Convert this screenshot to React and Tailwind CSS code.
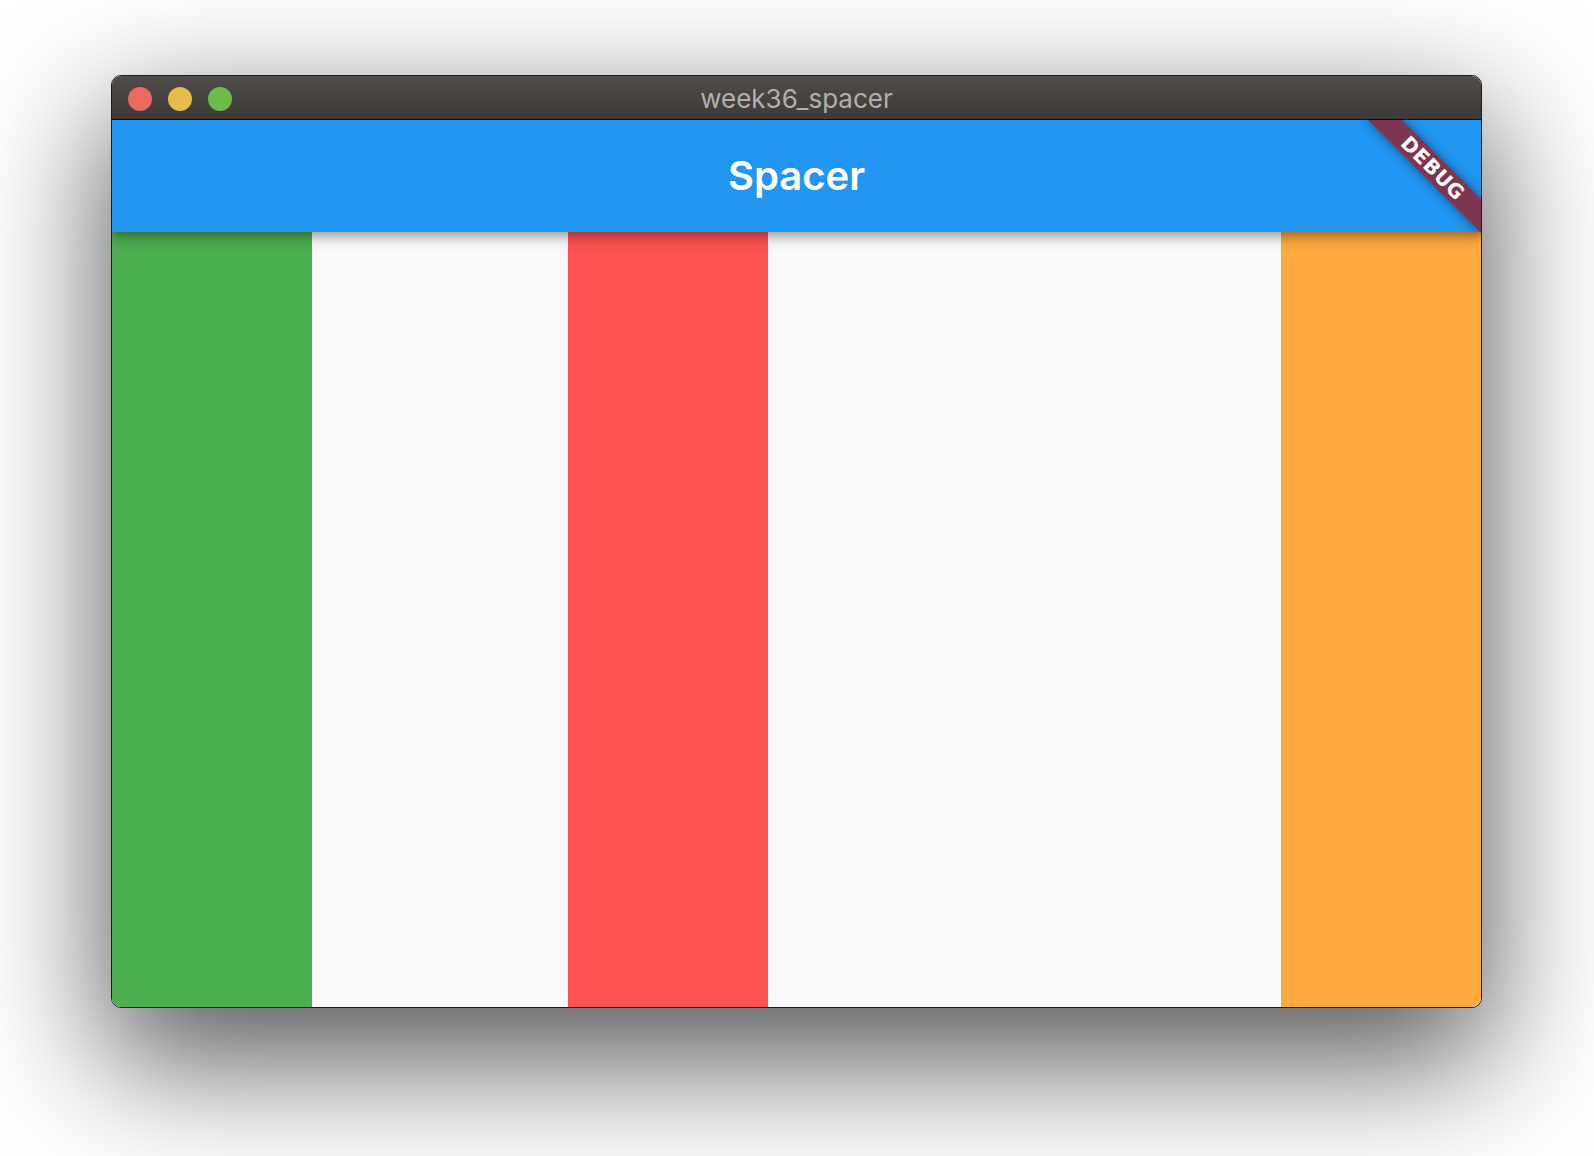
export default function App() {
  return (
    <div className="w-[1594px] h-[1156px] bg-white overflow-hidden pl-[111px] pt-[75px]">
      <div className="w-[1371px] h-[933px] rounded-[10px] border border-[#1c1c1c] bg-[#fafafa] flex flex-col overflow-hidden shadow-[0_48px_130px_6px_rgba(0,0,0,0.66)]">
        {/* Title bar */}
        <div className="relative h-[44px] shrink-0 bg-gradient-to-b from-[#4f4c4a] to-[#3c3937] border-b border-[#0d0d0d] flex items-center">
          <div className="flex items-center gap-[16px] pl-[16px] pt-[2px]">
            <div className="w-[24px] h-[24px] rounded-full bg-[#ed6a5e]" />
            <div className="w-[24px] h-[24px] rounded-full bg-[#e1bf4a]" />
            <div className="w-[24px] h-[24px] rounded-full bg-[#6cbd46]" />
          </div>
          <div className="absolute inset-0 flex items-center justify-center pt-[3px]">
            <span className="text-[26px] text-[#b2afad] font-['Inter',sans-serif] leading-none">week36_spacer</span>
          </div>
        </div>
        {/* Body */}
        <div className="relative flex-1 flex flex-col overflow-hidden">
          <div className="relative z-10 h-[112px] shrink-0 bg-[#2196f3] flex items-center justify-center shadow-[0_4px_8px_-2px_rgba(0,0,0,0.2),0_8px_10px_0_rgba(0,0,0,0.14),0_2px_20px_0_rgba(0,0,0,0.12)]">
            <span className="text-white text-[40px] font-semibold font-['Inter',sans-serif] leading-none">Spacer</span>
          </div>
          <div className="flex-1 flex">
            <div className="w-[200px] shrink-0 bg-[#4caf50]" />
            <div className="flex-1" />
            <div className="w-[200px] shrink-0 bg-[#ff5252]" />
            <div className="flex-[2]" />
            <div className="w-[200px] shrink-0 bg-[#ffab40]" />
          </div>
          <div className="absolute z-20 top-[36px] right-[-32px] w-[160px] h-[24px] rotate-45 bg-[#7e3551] shadow-[0_0_12px_rgba(0,0,0,0.45)] flex items-center justify-center">
            <span className="text-white text-[20px] font-bold font-['DejaVu_Sans',sans-serif] leading-none tracking-[0.5px]">DEBUG</span>
          </div>
        </div>
      </div>
    </div>
  );
}
